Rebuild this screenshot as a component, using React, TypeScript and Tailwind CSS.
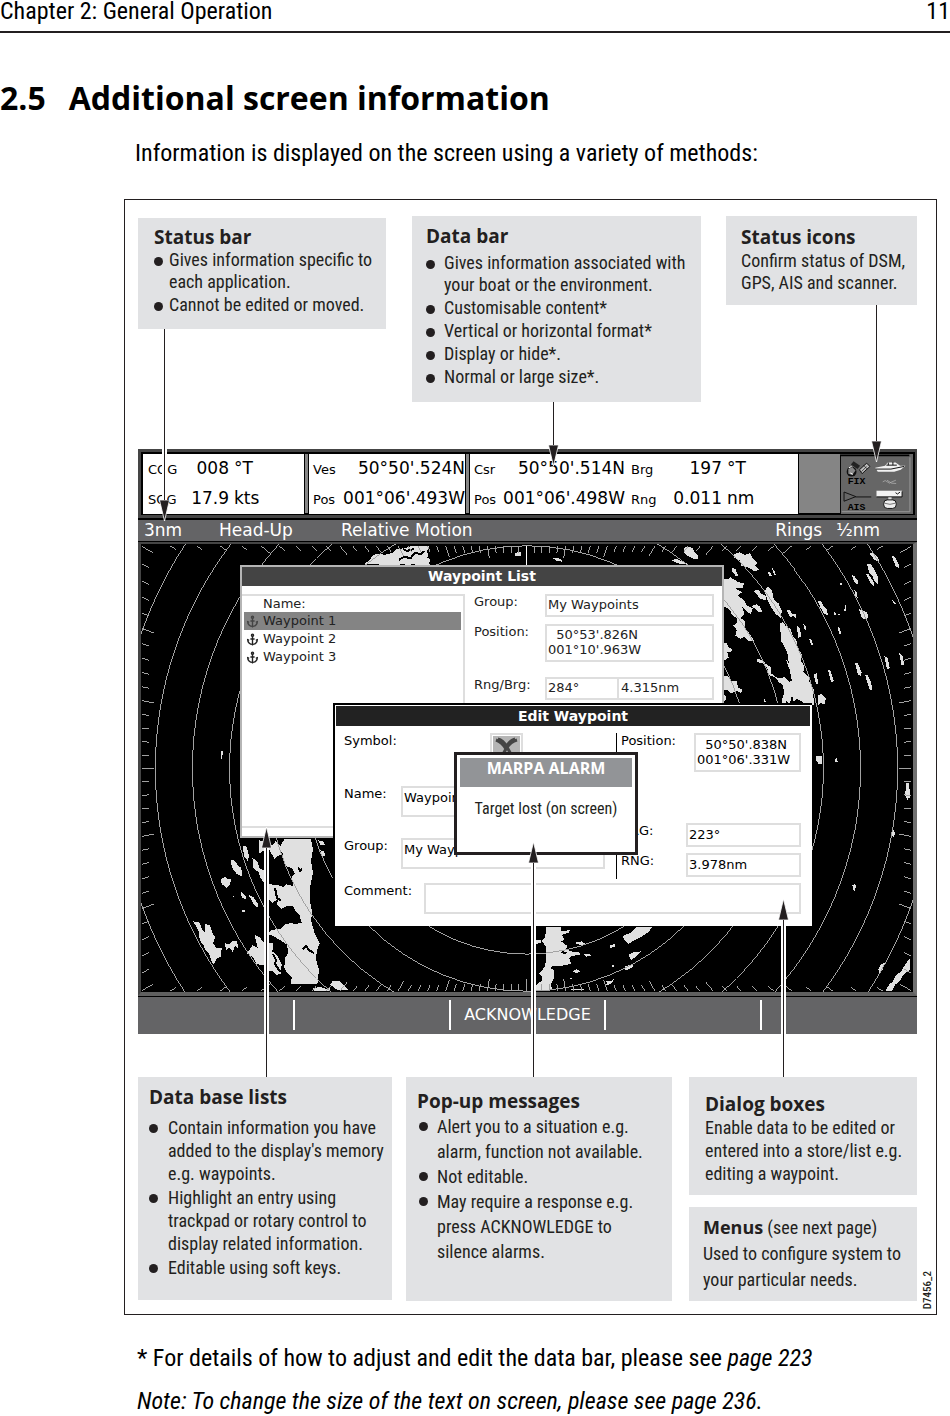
import type { ReactNode } from "react";
import clsx from "clsx";
import { Anchor } from "lucide-react";

// ── Callouts ────────────────────────────────────────────────────────────────

interface ArrowProps {
  direction: "up" | "down";
  className: string;
}

/** Leader line with a white halo so that it stays readable over the screen. */
function Arrow({ direction, className }: ArrowProps) {
  const head = (
    <svg viewBox="0 0 11 21" className="h-[21px] w-[11px] shrink-0" aria-hidden="true">
      <path
        d={direction === "down" ? "M0.5 0H10.5L5.5 21Z" : "M0.5 21H10.5L5.5 0Z"}
        fill="#231f20"
        stroke="#fff"
        strokeWidth="0.8"
      />
    </svg>
  );
  return (
    <div className={clsx("pointer-events-none absolute z-20 flex w-[11px] flex-col items-center", className)}>
      {direction === "up" && head}
      <div className="w-[5px] grow border-x-2 border-white bg-[#231f20]" />
      {direction === "down" && head}
    </div>
  );
}

function Callout({ title, className, children }: { title?: string; className: string; children: ReactNode }) {
  return (
    <section className={clsx("relative bg-[#e1e2e4] whitespace-nowrap", className)}>
      {title && <h3 className="font-['Open_Sans'] text-[19px] leading-[22px] font-bold">{title}</h3>}
      {children}
    </section>
  );
}

function Bullet({ className, children }: { className: string; children: ReactNode }) {
  return (
    <li className={clsx("flex", className)}>
      <span className="mt-[8px] size-[9px] shrink-0 rounded-full bg-[#231f20]" />
      <span>{children}</span>
    </li>
  );
}

// ── Data bar ────────────────────────────────────────────────────────────────

function Reading({ label, value, className }: { label: string; value: string; className?: string }) {
  return (
    <div className={clsx("flex items-baseline justify-between", className)}>
      <span className="text-[13px]">{label}</span>
      <span>{value}</span>
    </div>
  );
}

function StatusIcons() {
  return (
    <svg viewBox="0 0 228 183" preserveAspectRatio="xMidYMid slice" className="size-full" aria-label="Status icons">
      <rect width="228" height="183" fill="#666" />
      <path d="M0 4H214M3 4V183" stroke="#000" strokeWidth="5" />
      <path d="M216 10V176H8" fill="none" stroke="#999" strokeWidth="3" />
      <circle cx="38" cy="54" r="15" fill="#111" />
      <path d="M28 46l12 -6l10 10l-10 14l-12 -4z" fill="#888" />
      <path d="M30 42l8 -4M34 58l8 4" stroke="#fff" strokeWidth="3" />
      <path d="M44 22l20 14l-8 10l-20 -14z" fill="#222" />
      <path d="M62 48l22 -20l10 10l-24 22z" fill="#bbb" stroke="#111" strokeWidth="3" />
      <path d="M68 54l16 -16M74 34l12 12" stroke="#111" strokeWidth="2" />
      <path d="M110 42l30 -6l8 -10h24l14 10l16 0l-14 12l-20 6h-50z" fill="#f2f2f2" />
      <path d="M112 46h46l40 -8M144 34h32M150 26v8M164 24v10" stroke="#111" strokeWidth="3" fill="none" />
      <path d="M133 85q8 -8 14 0t14 0l12 -5M146 80l14 9l14 1" stroke="#bbb" strokeWidth="2" fill="none" />
      <path d="M15 116v28l36 -14z" fill="none" stroke="#111" strokeWidth="3" />
      <path d="M50 131h48" stroke="#111" strokeWidth="3" />
      <rect x="114" y="112" width="78" height="18" fill="#f2f2f2" />
      <path d="M114 131h78v-17M172 118l6 4l8 -6" stroke="#111" strokeWidth="3" fill="none" />
      <path d="M150 132h10v8h-10z" fill="#ddd" />
      <rect x="136" y="140" width="38" height="26" rx="11" fill="#eee" stroke="#111" strokeWidth="3" />
      <path d="M138 150q17 7 34 0" stroke="#333" strokeWidth="2" fill="none" />
      <g className="font-['Liberation_Mono'] text-[30px] font-bold">
        <text x="26" y="91">FIX</text>
        <text x="26" y="172">AIS</text>
      </g>
    </svg>
  );
}

function DataBar() {
  return (
    <div className="h-[69px] border-[3px] border-r-2 border-[#454545] text-[17px] leading-[28px] text-black">
      <div className="grid h-full grid-cols-[162fr_158fr_330fr_35fr_73fr] gap-x-[3px] border-2 border-black bg-[#858585]">
        <div className="flex flex-col justify-around border-r border-black bg-white pl-[5px]">
          <div className="grid grid-cols-[36px_45px_auto] items-baseline">
            <span className="text-[13px]">COG</span>
            <span className="text-right">008</span>
            <span className="pl-[5px]">°T</span>
          </div>
          <div className="grid grid-cols-[36px_45px_auto] items-baseline">
            <span className="text-[13px]">SOG</span>
            <span className="text-right">17.9</span>
            <span className="pl-[5px]">kts</span>
          </div>
        </div>
        <div className="flex flex-col justify-around border-x border-black bg-white pl-[4px]">
          <Reading label="Ves" value="50°50'.524N" />
          <Reading label="Pos" value="001°06'.493W" />
        </div>
        <div className="flex flex-col justify-around border-x border-black bg-white pl-[4px]">
          <div className="flex items-baseline">
            <Reading className="w-[151px]" label="Csr" value="50°50'.514N" />
            <Reading className="ml-[6px] w-[91px]" label="Brg" value="197" />
            <span className="pl-[5px]">°T</span>
          </div>
          <div className="flex items-baseline">
            <Reading className="w-[151px]" label="Pos" value="001°06'.498W" />
            <Reading className="ml-[6px] w-[91px]" label="Rng" value="0.011" />
            <span className="pl-[5px]">nm</span>
          </div>
        </div>
        <div className="col-start-5 h-[60px]">
          <StatusIcons />
        </div>
      </div>
    </div>
  );
}

// ── Radar picture ───────────────────────────────────────────────────────────

const RING_STEP = 37.2;
const HALF_WIDTH = 385;
const HALF_HEIGHT = 223;

const RINGS = Array.from({ length: 11 }, (_, i) => (i + 1) * RING_STEP);

// Bearing marks every 2°, a long one every 10°, laid along the screen edge
const TICKS = Array.from({ length: 180 }, (_, i) => {
  const angle = (i * 2 * Math.PI) / 180;
  const dx = Math.cos(angle);
  const dy = Math.sin(angle);
  const reach = Math.min(HALF_WIDTH / Math.abs(dx), HALF_HEIGHT / Math.abs(dy));
  const length = i % 5 === 0 ? 12 : 7;
  return `M${(dx * reach).toFixed(1)} ${(dy * reach).toFixed(1)}L${(dx * (reach - length)).toFixed(1)} ${(dy * (reach - length)).toFixed(1)}`;
}).join("");

const LAND_NW =
  "M708 68l16-12l8-14l22-4l12 4l24-6l12-12l24-2l18-6h58l-8 16l6 10l-4 8l10 6l-6 10l6 8h-40l-12-6l-18 6l-14-6l-16 6zM1160 36l16-4l2 12l-18 2zM275 632l6-2l-2 26l-3 0z";

const LAND_NE =
  "M497 22l12-6l14 6l6 12l11 8l-2 14l-14-4l-16-8l-10-10zM102 52l14-2l14 6v6l-14-2zM460 58l14-4l20 8l12 6h-24z" +
  "M648 40l16-6l18 8l14-6l8 16l14 14l-6 8l12 14l-16 2l-16-10l-22-6l-4-16l-18-8zM642 80l10 4l8 20l-8 0l-10-14zM748 90l8 4l6 12l-8-2zM762 80l8 10l4 14l-6-2z" +
  "M612 112l18 4l6-8l22 14l20 6l-4 12l-22 2l20 12l-12 10l20 16l6 14l18 8l-6 18l-14-10l-12-12l8 22l-12 12l14 10l-2 18l16 20l14 22l-20-2l-10-12l-14 6l-14-10l4-16l-10-14l12-8l-2-14l-14-10l-6-14l-14-10l-12-4z" +
  "M706 150l14-4l12 14l12 6v12l-16-4zM700 196l16-6l10 8l8 16l-14-2l-8-8zM740 150l10-14l12 14l6 26l14 12l10 22l-4 22l-16-14l-14-22l-10-20z" +
  "M786 248l10-4l8 12l14 8l6 20l12 16l4 22l12 18l-2 22l10 14l-4 18l16 14l4 20l12 20l-2 18l4 28l-18-6l-10 4l-14-12l-12-6l-8 10l-6-20l-6 26l-10-10l-10 18l-4-20l6-18l-2-26l-14-10l-10-14l-18-6l-6-22l-14-14l-18-4l2-10l16 4l10 12l14 8l2 20l18 14l24-2l12 14l8-4l-8-38l-4-40l-10-24l-10-16z" +
  "M806 208l8-2l8 12l12 0l2 14l-10-6l-10 2zM836 254l10 8l4 24l-8 6zM856 250l6 2l4 18l-6-4zM874 294l6 0l6 20l-6-2z" +
  "M900 182l10-2l8 16l10 12l2 16l-12-6l-10-18zM948 214l6 2l2 8l-6-2zM962 218h6v4h-6zM980 186l4 8l2 16l-8 2l4-14z" +
  "M1002 102l8 4l12 14l-2 10l-10-6zM1048 70l10-2l10 14l14 30l-2 18l-10-10l-6-16l-10-10zM1044 98l8 2l18 26l0 12l-12-12zM1056 38l10-4l16 16l2 14l-14-8zM1122 44l10 4l12 24l2 10l-12-6zM968 126h6v6h-6z" +
  "M1010 148l6 4l4 20l-6-4zM1024 204l10 6l14 4l4 18l-12 4l-10-10zM960 258l6 4l4 18l-6-2zM1122 176l6 4l6 8h-6z" +
  "M1012 368l8-2l12 30l-4 10l-8-6zM1042 402l8 2l10 20l4 26l-8-2l-8-24zM1100 346l10 6l6 30l-8 4zM1144 336l10 8l6 28l-8 2zM930 386l8 4l10 32l-8 2zM888 402l8-4l6 32l-8-2zM900 464l12-4l12 14l-4 18l-12-6l-8 8z" +
  "M612 304l14 4l6 12l10 4l-2 8l-12 2l4 16l-12 8l-8-4zM612 404l18 2l10 14l16 2l4 18l12 6l-2 12l-16-8l-14 8l-16-12l-12 8zM612 454l12 14v10l-12 6zM738 472l6 12l-4 4z" +
  "M896 646h18v26h-10l-8-10zM954 648l4 6l2 10l-8 0zM1164 726l10 2l4 44l-10 4l-4-18zM804 356l14 18l-6 4z";

const LAND_SW =
  "M466 146H546l6 32l-6 34l6 36l-8 40l-2 42l8 36l-4 24l10 36l16 34l-6 16l-6 28l10 36l-4 40l-12 2H486l2-22l-14-12l-8-16l2-28l10-16l-4-24l-24-16l-20-12l-14-4l10-12l28-4l12-12l20-6l10 4l22-4l-6-22l-12-14l-8-16l-16 0l-20 10l-12-14l4-16l-18 12l-10-10l-2-32l-8-10l14-4l26 4l14 4l8-8l20 6l-4-30l10-8l-8-16l-18-6l-8-16l-2-22l-12-14z" +
  "M354 490l16-24l16 8l-10-40l16 8l12 16l28 0l-2 26l16 14l12 24l-2 28l-14 6l-14-14l-14 2l-10-18l-22-4l-8-18zM192 394l18 2l10 24l8 8l0-26l14 4l8 24l8 12l-6 18l10 14l16 0l-4 26l-10 4l-10 20l-8-12l-6-20l-12-12l-4-14l-12-14l-4-30z" +
  "M274 268l14-8l8 6l10 2l-4 16l-10 8l-14-10zM306 208l12 4l8 14l10 6l4 26l-16-6l-12-14l-6-16zM340 166l12 2l8 30l-4 14l-10-12zM370 204l14 8l8 22l12 6v36l-10-14l-6-16l-16-14zM334 300l8 12l10 6v10l-14-6zM358 314l14 6l16 22v12l-14-12zM288 460l12 2l10-8l14 0l4 22l-10-8l-8 18l-8-14l-12 8zM338 358h10v6h-10zM312 316h4v4h-4z" +
  "M390 150l24 8l16 8l10-14l18 20l-2 22l-12 4l-8 8l-14-26l-14-2l-18 12zM604 584l8-12l22 2l14 16l10 10h-32l-12-8zM568 150l16 4l4 10l-14 0zM574 180l12 2l2 14l-8 4zM552 596l20-6l18 6l14-2v8h-50z";

const LAND_SE =
  "M84 410h42l2 14l26-4l-2 8l-22 6l8 14l-10 6l20 14l-6 10l16 6l24 2l4 8l-28 4l-6 6l6 16l-18 6l-38 2l-6 6l12 8l-2 24l-8 14l2 20l-50 4l4-20l18-14l-2-12l-8-8l18-20l4-40l-2-20l-12-18l10-12z" +
  "M314 438l22-10l16-16h50l-14 16l-18 12l-22 10l-18 12l-12-12zM330 494l16-8l24-2l-14 14l-18 12zM318 530l20-6l10 4l-26 14zM276 466l14-4v8l-14 4zM196 494l14-4l8 6l-14 4zM168 458l22-4l12 8l-14 4zM162 544l12-6l12 6l-10 6zM144 568l16-4v4zM260 572l16 2l10-6l-6 12l-20 8l8-8zM280 526h8v6h-8zM46 452l20-4l4 8l-16 6zM156 598l20-2l32 4h-50z" +
  "M1004 284l8-2l4 6l-6 14l-4-4zM1122 126l6-6l4 8l-4 14l-4-6zM1162 2l12-2l2 12l-6 16l-6-8zM1082 538l8-16l12-4l-6 18l-10 18zM1178 504v34l-20 16l-14 22l-12 8l-8 18h-20l10-18l12-10l10-20l14-8l12-22z";

function RadarPicture() {
  return (
    <svg
      viewBox="-388 -225 777 449"
      preserveAspectRatio="xMidYMid slice"
      shapeRendering="crispEdges"
      className="h-full w-full"
      aria-hidden="true"
    >
      <rect x="-389" y="-225" width="779" height="450" fill="#000" />
      <g fill="#e0e0e0">
        <path d={LAND_NW} transform="translate(-398 -228) scale(0.3333)" />
        <path d={LAND_NE} transform="translate(-8 -228) scale(0.3333)" />
        <path d={LAND_SW} transform="translate(-398 22) scale(0.3333)" />
        <path d={LAND_SE} transform="translate(-8 22) scale(0.3333)" />
      </g>
      <path
        d="M-128 -209l5 -3l7 1l4 -5l6 1l4 -3M-124 -220l4 2l7 -2M-229 99l2 4l2 -3M-252 120l2 10l4 2M-224 181l3 -3l3 4l5 3M-254 186l3 6l-1 4l4 6l3 2M35 184l5 1"
        fill="none"
        stroke="#000"
        strokeWidth="2"
      />
      <g fill="none" stroke="#a3a3a3">
        {RINGS.map((r) => (
          <circle key={r} r={r} />
        ))}
        <path d={TICKS} />
      </g>
      <path d="M0.5 -223V-190" stroke="#fff" />
    </svg>
  );
}

// ── Windows on the radar ────────────────────────────────────────────────────

const FIELD = "resize-none overflow-hidden border-2 border-[#dedede] bg-white outline-none";

const WAYPOINTS = ["Waypoint 1", "Waypoint 2", "Waypoint 3"];

function WaypointListWindow() {
  return (
    <section className="absolute top-[21px] left-[99px] flex h-[273px] w-[484px] flex-col border-2 border-[#b5b5b5] bg-white text-[13px] leading-[16px] text-[#222]">
      <h4 className="bg-[#444] text-center text-[14px] leading-[19px] font-bold text-white">Waypoint List</h4>
      <div className="flex grow gap-[9px] pt-[8px] pb-[8px]">
        <div className="w-[223px] border-2 border-l-0 border-[#dedede]">
          <p className="pl-[21px]">Name:</p>
          <ul>
            {WAYPOINTS.map((name, i) => (
              <li key={name} className={clsx("ml-[2px] flex h-[18px] w-[217px] items-center gap-[4px] pl-[2px]", i === 0 && "bg-[#848484]")}>
                <Anchor className={clsx("size-[13px] shrink-0", i === 0 && "text-[#444]")} strokeWidth={2.5} />
                {name}
              </li>
            ))}
          </ul>
        </div>
        <div className="grid content-start grid-cols-[71px_169px] grid-rows-[30px_53px_22px]">
          <label htmlFor="list-group">Group:</label>
          <input id="list-group" readOnly defaultValue="My Waypoints" className={clsx(FIELD, "h-[23px] px-[1px] pb-[2px]")} />
          <label htmlFor="list-position">Position:</label>
          <textarea
            id="list-position"
            readOnly
            rows={2}
            defaultValue={"  50°53'.826N\n001°10'.963W"}
            className={clsx(FIELD, "h-[38px] px-[1px] pt-[1px] leading-[15px]")}
          />
          <label htmlFor="list-bearing">Rng/Brg:</label>
          <div className="flex">
            <input id="list-bearing" readOnly defaultValue="284°" className={clsx(FIELD, "h-[23px] w-[74px] px-[1px] pb-[2px]")} />
            <input
              aria-label="Range"
              readOnly
              defaultValue="4.315nm"
              className={clsx(FIELD, "-ml-[2px] h-[23px] w-[97px] px-[2px] pb-[2px]")}
            />
          </div>
        </div>
      </div>
    </section>
  );
}

function EditWaypointWindow() {
  return (
    <section className="absolute top-[159px] left-[192px] h-[223px] w-[479px] border-t-2 border-l-2 border-black bg-white p-[1px] pr-[2px] text-[13px] leading-[16px] text-black">
      <h4 className="bg-[#222] text-center text-[14px] leading-[20px] font-bold text-white">Edit Waypoint</h4>
      <div className="mt-[7px] mr-[9px] flex pl-[8px]">
        <div className="grid h-[146px] w-[272px] grid-cols-[57px_204px] grid-rows-[53px_52px_41px]">
          <span>Symbol:</span>
          <div className="ml-[89px] size-[33px] border-2 border-[#dedede] p-[1px]">
            <svg viewBox="0 0 27 27" className="size-full bg-[#b5b5b5]" aria-label="Crossed marker">
              <path d="M3 4q6 2 10 9q4 -7 11 -9M5 3q5 1 9 8M22 3q-5 1 -9 8M8 22l6 -11l6 11" fill="none" stroke="#444" strokeWidth="3" />
            </svg>
          </div>
          <label htmlFor="edit-name">Name:</label>
          <input id="edit-name" readOnly defaultValue="Waypoint 1" className={clsx(FIELD, "h-[31px] px-[1px] pb-[8px]")} />
          <label htmlFor="edit-group">Group:</label>
          <input id="edit-group" readOnly defaultValue="My Waypoints" className={clsx(FIELD, "h-[31px] px-[1px] pb-[8px]")} />
        </div>
        <div className="grid grow grid-rows-[90px_30px_26px] border-l border-black pl-[4px]">
          <div className="flex justify-between">
            <label htmlFor="edit-position">Position:</label>
            <textarea
              id="edit-position"
              readOnly
              rows={2}
              defaultValue={"  50°50'.838N\n001°06'.331W"}
              className={clsx(FIELD, "h-[39px] w-[107px] px-[1px] pt-[2px] leading-[15px]")}
            />
          </div>
          <div className="flex justify-between">
            <label htmlFor="edit-brg">BRG:</label>
            <input id="edit-brg" readOnly defaultValue="223°" className={clsx(FIELD, "h-[24px] w-[115px] px-[1px] pb-[2px]")} />
          </div>
          <div className="flex justify-between">
            <label htmlFor="edit-rng">RNG:</label>
            <input id="edit-rng" readOnly defaultValue="3.978nm" className={clsx(FIELD, "h-[24px] w-[115px] px-[1px] pb-[2px]")} />
          </div>
        </div>
      </div>
      <div className="mt-[4px] mr-[9px] flex justify-between pl-[8px]">
        <label htmlFor="edit-comment">Comment:</label>
        <input id="edit-comment" readOnly className={clsx(FIELD, "h-[31px] w-[377px]")} />
      </div>
    </section>
  );
}

function AlarmPopup() {
  return (
    <section className="absolute top-[208px] left-[313px] h-[103px] w-[184px] border-[3px] border-[#231f20] bg-white p-[3px] text-center text-[#231f20]">
      <h4 className="h-[29px] bg-[#929497] font-['Open_Sans'] text-[16px] leading-[21px] font-bold text-white">MARPA ALARM</h4>
      <p className="mt-[12px] font-['Roboto_Condensed'] text-[16px] leading-[20px]">Target lost (on screen)</p>
    </section>
  );
}

const SOFT_KEYS = ["", "", "ACKNOWLEDGE", "", ""];

function RadarScreen() {
  return (
    <div className="bg-[#646466] font-['DejaVu_Sans',sans-serif]">
      <DataBar />
      <div className="flex border-t-2 border-b border-black bg-[#646466] pr-[37px] pl-[6px] text-[17px] leading-[21px] text-white">
        <span className="w-[75px]">3nm</span>
        <span className="w-[122px]">Head-Up</span>
        <span>Relative Motion</span>
        <span className="ml-auto pr-[14px]">Rings</span>
        <span>½nm</span>
      </div>
      <div className="relative h-[454px] border-t-2 border-r-4 border-b-4 border-l-3 border-[#454545] border-r-[#707070] border-b-[#606060] bg-black">
        <RadarPicture />
        <WaypointListWindow />
        <EditWaypointWindow />
        <AlarmPopup />
      </div>
      <div className="grid h-[38px] grid-cols-5 divide-x-2 divide-white border-t border-black pt-[3px] pb-[4px] pl-[2px] text-[16px] text-white">
        {SOFT_KEYS.map((label, i) => (
          <button key={i} type="button" aria-label={label || `Soft key ${i + 1}`}>
            {label}
          </button>
        ))}
      </div>
    </div>
  );
}

// ── Page ────────────────────────────────────────────────────────────────────

export default function App() {
  return (
    <main className="bg-white pb-[2px] font-['Roboto_Condensed','Roboto',sans-serif] text-[24px] leading-[28px] text-black">
      <header className="flex h-[33px] justify-between border-b-2 border-[#231f20] text-[24px] leading-[22px]">
        <span>Chapter 2: General Operation</span>
        <span>11</span>
      </header>

      <h1 className="mt-[44px] flex gap-[23px] font-['Open_Sans'] text-[32px] leading-[42px] font-bold">
        <span>2.5</span>
        <span>Additional screen information</span>
      </h1>
      <p className="mt-[20px] ml-[135px]">Information is displayed on the screen using a variety of methods:</p>

      <figure className="relative mt-[32px] mr-[13px] ml-[124px] border border-[#231f20] pt-[16px] pr-[19px] pb-[13px] pl-[13px] text-[18px] text-[#231f20]">
        <div className="grid grid-cols-[248fr_26fr_289fr_25fr_191fr] items-start">
          <Callout title="Status bar" className="col-start-1 mt-[2px] h-[111px] pt-[8px] pl-[16px]">
            <ul className="mt-[1px] space-y-[1px] leading-[22px]">
              <Bullet className="gap-[6px]">
                Gives information specific to
                <br />
                each application.
              </Bullet>
              <Bullet className="gap-[6px]">Cannot be edited or moved.</Bullet>
            </ul>
            <Arrow direction="down" className="top-full left-[21px] h-[192px]" />
          </Callout>
          <Callout title="Data bar" className="col-start-3 h-[186px] pt-[9px] pl-[14px]">
            <ul className="mt-[5px] space-y-[1px] leading-[22px]">
              <Bullet className="gap-[9px]">
                Gives information associated with
                <br />
                your boat or the environment.
              </Bullet>
              <Bullet className="gap-[9px]">Customisable content*</Bullet>
              <Bullet className="gap-[9px]">Vertical or horizontal format*</Bullet>
              <Bullet className="gap-[9px]">Display or hide*.</Bullet>
              <Bullet className="gap-[9px]">Normal or large size*.</Bullet>
            </ul>
            <Arrow direction="down" className="top-full left-[136px] h-[64px]" />
          </Callout>
          <Callout title="Status icons" className="col-start-5 h-[89px] pt-[10px] pl-[15px]">
            <p className="mt-[2px] leading-[22px]">
              Confirm status of DSM,
              <br />
              GPS, AIS and scanner.
            </p>
            <Arrow direction="down" className="top-full left-[145px] h-[157px]" />
          </Callout>
        </div>

        <div className="mt-[47px]">
          <RadarScreen />
        </div>

        <div className="mt-[43px] grid grid-cols-[254fr_14fr_266fr_17fr_228fr] items-start">
          <Callout title="Data base lists" className="col-start-1 h-[223px] pt-[9px] pl-[11px]">
            <ul className="mt-[8px] space-y-[1px] leading-[23px]">
              <Bullet className="gap-[10px]">
                Contain information you have
                <br />
                added to the display's memory
                <br />
                e.g. waypoints.
              </Bullet>
              <Bullet className="gap-[10px]">
                Highlight an entry using
                <br />
                trackpad or rotary control to
                <br />
                display related information.
              </Bullet>
              <Bullet className="gap-[10px]">Editable using soft keys.</Bullet>
            </ul>
            <Arrow direction="up" className="bottom-full left-[123px] h-[250px]" />
          </Callout>
          <Callout title="Pop-up messages" className="col-start-3 h-[224px] pt-[13px] pl-[11px]">
            <ul className="mt-[2px] pl-[2px] leading-[25px]">
              <Bullet className="gap-[9px]">
                Alert you to a situation e.g.
                <br />
                alarm, function not available.
              </Bullet>
              <Bullet className="gap-[9px]">Not editable.</Bullet>
              <Bullet className="gap-[9px]">
                May require a response e.g.
                <br />
                press ACKNOWLEDGE to
                <br />
                silence alarms.
              </Bullet>
            </ul>
            <Arrow direction="up" className="bottom-full left-[122px] h-[235px]" />
          </Callout>
          <div className="col-start-5 space-y-[12px]">
            <Callout title="Dialog boxes" className="h-[118px] pt-[16px] pl-[16px]">
              <p className="mt-[1px] leading-[23px]">
                Enable data to be edited or
                <br />
                entered into a store/list e.g.
                <br />
                editing a waypoint.
              </p>
              <Arrow direction="up" className="bottom-full left-[89px] h-[178px]" />
            </Callout>
            <Callout className="h-[94px] pt-[7px] pl-[14px]">
              <p className="leading-[26px]">
                <strong className="font-['Open_Sans'] font-bold">Menus</strong> (see next page)
                <br />
                Used to configure system to
                <br />
                your particular needs.
              </p>
            </Callout>
          </div>
        </div>
        <figcaption className="absolute right-[1px] bottom-[5px] rotate-180 text-[11px] leading-[14px] font-medium [writing-mode:vertical-rl]">
          D7456_2
        </figcaption>
      </figure>

      <p className="mt-[29px] ml-[137px]">
        * For details of how to adjust and edit the data bar, please see{" "}
        <a href="#page-223" className="italic">
          page 223
        </a>
      </p>
      <p className="mt-[15px] ml-[137px] italic">
        Note: To change the size of the text on screen, please see{" "}
        <a href="#page-236">page 236</a>.
      </p>
    </main>
  );
}
